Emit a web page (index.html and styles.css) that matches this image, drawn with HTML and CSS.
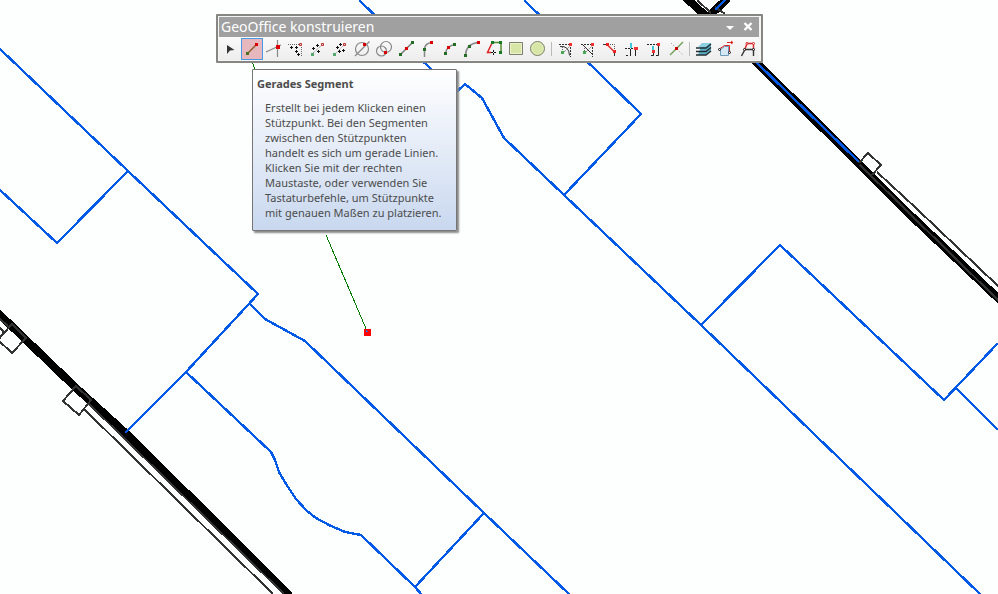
FILE: index.html
```
<!DOCTYPE html>
<html lang="de">
<head>
<meta charset="utf-8">
<title>GeoOffice konstruieren</title>
<link rel="stylesheet" href="styles.css">
</head>
<body>
<main class="workspace">
  <svg class="map" viewBox="0 0 998 594" preserveAspectRatio="xMinYMin slice" aria-hidden="true">
    <g class="road">
      <path d="M-2 313L75 387 130 437 290 596"/>
      <path d="M684 -4L756 62 859 164 906 211 1001 301"/>
      <path d="M708 17L728 -2"/>
    </g>
    <g class="kerb">
      <path d="M88 403L284 594M84 409L273 594M0 319L8 326"/>
      <path d="M63 401L76 386 91 400 79 415Z"/>
      <path d="M0 328L4 332 0 337M-2 340L12 353 26 338 12 324Z"/>
      <path d="M697 0L711 13M859 163L868 153 881 165 872 175M877 172L917 209 998 286M860 165L998 300M715 7L725 14"/>
    </g>
    <g class="parcel">
      <path d="M0 49L128 171 258 294 186 372 125 433"/>
      <path d="M0 190L57 243 128 171"/>
      <path d="M249 303L265 319 305 341 484 513 570 595"/>
      <path d="M186 372L271 452 275 460 279 472 286 484 296 499 307 511 316 518 329 525 345 532 361 535 415 587 422 595M484 513L415 587"/>
      <path d="M359 0L432 70M450 98L465 84 482 98 504 138 564 195 701 325 981 595"/>
      <path d="M524 0L641 114 564 195"/>
      <path d="M701 325L780 245 944 400 998 343M956 388L998 430"/>
      <path d="M755 61L859 162M715 10L726 -1"/>
    </g>
    <path class="sketch" d="M252 62L255 69M326 235L367 331"/>
    <path fill="#f00" d="M364 329h7v7h-7z"/>
    <path fill="#3a6ad8" d="M366 330h1v1h1v1h-2z"/>
  </svg>

  <section class="toolbar" aria-label="GeoOffice konstruieren">
    <header class="titlebar">
      <h1 class="title">GeoOffice konstruieren</h1>
      <button class="title-btn" aria-label="Optionen"><svg viewBox="0 0 18 18"><path fill="#fff" d="M5 8h8l-4 4z"/></svg></button>
      <button class="title-btn" aria-label="Schließen"><svg viewBox="0 0 18 18"><path stroke="#fff" stroke-width="2.400" d="M5.500 5l7 7M12.500 5l-7 7"/></svg></button>
    </header>
    <div class="tools">
      <button class="tool" aria-label="Auswählen"><svg viewBox="0 0 22 22"><path fill="#333" d="M8 7l7.500 5-4.500.500L8 16z"/></svg></button>
      <button class="tool active" aria-label="Gerades Segment" aria-describedby="tip"><svg viewBox="0 0 22 22"><path stroke="#8a5a28" stroke-width="1.500" d="M6 16l9-9"/><path fill="#46701c" d="M5 14h3v3H5z"/><path fill="#d00" d="M14 5h3v3h-3z"/></svg></button>
      <button class="tool" aria-label="Schnittpunkt"><svg viewBox="0 0 22 22"><path stroke="#888" stroke-width="1.200" d="M3 14l15-7M14.500 2v17"/><path fill="#d00" d="M13 7h4v4h-4z"/></svg></button>
      <button class="tool" aria-label="Richtung und Länge"><svg viewBox="0 0 22 22"><path stroke="#666" stroke-dasharray="1 1" d="M3 6.500h11M16.500 9v10"/><path stroke="#111" d="M5 9.500h3M6.500 8v3M10 9.500h3M11.500 8v3M10 13.500h3M11.500 12v3M12 16.500h3M13.500 15v3"/><path fill="#f4c8c8" stroke="#b33" d="M14.500 5.500h2v2h-2z"/></svg></button>
      <button class="tool" aria-label="Abstand"><svg viewBox="0 0 22 22"><path stroke="#777" stroke-dasharray="1 1" d="M6 15l9-8"/><path stroke="#111" d="M5 10.500h3M6.500 9v3M9 7.500h3M10.500 6v3M10 13.500h3M11.500 12v3"/><path fill="#53a96b" d="M4 15h3v3H4z"/><path fill="#f4c8c8" stroke="#b33" d="M14.500 5.500h2v2h-2z"/></svg></button>
      <button class="tool" aria-label="Mittelpunkt"><svg viewBox="0 0 22 22"><path stroke="#888" stroke-dasharray="1 1" d="M6 16l9-9"/><path stroke="#111" d="M7 9.500h3M8.500 8v3M9 13.500h3M10.500 12v3M13 12.500h3M14.500 11v3M10 6.500h3M11.500 5v3"/><path fill="#53a96b" d="M4 15h3v3H4z"/><path fill="#f4c8c8" stroke="#b33" d="M14.500 5.500h2v2h-2z"/></svg></button>
      <button class="tool" aria-label="Tangente am Kreis"><svg viewBox="0 0 22 22"><g stroke="#888" stroke-width="1.200"><circle cx="11" cy="11" r="6.500"/><path d="M4 18L18.500 3.500"/></g><path fill="#d00" d="M12 5h3v3h-3z"/></svg></button>
      <button class="tool" aria-label="Kreisschnitt"><svg viewBox="0 0 22 22"><g stroke="#888" stroke-width="1.200"><circle cx="13" cy="9" r="5.500"/><circle cx="8.500" cy="13" r="5"/></g><path fill="#d00" d="M11 13h3v3h-3z"/></svg></button>
      <button class="tool" aria-label="Mittelpunktlinie"><svg viewBox="0 0 22 22"><path stroke="#777" stroke-width="1.500" d="M5 17L18 4"/><path fill="#246b24" d="M4 15h3v3H4zM16 3h3v3h-3z"/><path fill="#d00" d="M10 9h3v3h-3z"/></svg></button>
      <button class="tool" aria-label="Tangentialer Bogen"><svg viewBox="0 0 22 22"><path stroke="#888" stroke-width="1.500" d="M7.500 19v-8Q8 5 15 4.500"/><path fill="#246b24" d="M6 10h3v3H6z"/><path fill="#d00" d="M13 3h3v3h-3z"/></svg></button>
      <button class="tool" aria-label="Bogensegment"><svg viewBox="0 0 22 22"><path stroke="#888" stroke-width="1.500" d="M6.500 16Q7 8 16 6.500"/><path fill="#246b24" d="M5 14h3v3H5zM14 5h3v3h-3z"/><path fill="#d00" d="M8 8h3v3H8z"/></svg></button>
      <button class="tool" aria-label="Endpunktbogen"><svg viewBox="0 0 22 22"><path stroke="#888" stroke-width="1.500" d="M4.500 17Q5 6 17 4.500"/><path fill="#246b24" d="M3 16h3v3H3zM7 7h3v3H7z"/><path fill="#d00" d="M16 3h3v3h-3z"/></svg></button>
      <button class="tool" aria-label="Verfolgen"><svg viewBox="0 0 22 22"><path stroke="#528c32" stroke-width="1.500" d="M9 4.500h9V15"/><path stroke="#d22" stroke-width="1.500" d="M9 5L4.500 14.500H8"/><path fill="#197a24" d="M8 3h3v3H8zM16 3h3v3h-3zM16 13h3v3h-3z"/><path fill="#fff" d="M9 13h3v3H9z"/><path stroke="#111" d="M8 14.500h2M11 14.500h2M10.500 12v2M10.500 15v2"/></svg></button>
      <button class="tool" aria-label="Rechteck"><svg viewBox="0 0 22 22"><path fill="#d7e5a6" stroke="#7b7f6c" d="M4.500 4.500h13v12h-13z"/><path stroke="#ebf2ce" d="M5.500 5.500h11v10h-11z"/></svg></button>
      <button class="tool" aria-label="Kreis"><svg viewBox="0 0 22 22"><circle cx="10.500" cy="10.500" r="7" fill="#d7e5a6" stroke="#7b7f6c"/><circle cx="10.500" cy="10.500" r="5.500" stroke="#e4edbf"/></svg></button>
      <span class="divider"></span>
      <button class="tool" aria-label="Abrunden"><svg viewBox="0 0 22 22"><path stroke="#333" stroke-dasharray="2 1" d="M4 6.500h10M15.500 9v10"/><path stroke="#333" d="M5 8.500q9-1 9.500 9"/><path stroke="#666" stroke-dasharray="1 1" d="M7.500 9v5M9 14l6-6"/><path fill="#44a952" d="M6 13h3v3H6z"/><path fill="#e33" d="M14 5h3v3h-3z"/></svg></button>
      <button class="tool" aria-label="Abschrägen"><svg viewBox="0 0 22 22"><path stroke="#333" stroke-dasharray="2 1" d="M4 6.500h10M15.500 9v10"/><path stroke="#333" d="M6 7l9 9"/><path stroke="#666" stroke-dasharray="1 1" d="M7.500 10v4M9 14l6-6"/><path fill="#44a952" d="M6 13h3v3H6z"/><path fill="#e33" d="M14 5h3v3h-3z"/></svg></button>
      <button class="tool" aria-label="Fase"><svg viewBox="0 0 22 22"><path stroke="#333" d="M4 6.500h4M15.500 14v4"/><path stroke="#555" stroke-dasharray="1 1" d="M9 6.500h6.500V12"/><path stroke="#d22" stroke-width="1.200" d="M8 6.500l7 7"/><path fill="#e22" d="M7 5h3v3H7zM14 12h3v3h-3z"/></svg></button>
      <button class="tool" aria-label="Verlängern"><svg viewBox="0 0 22 22"><path stroke="#222" stroke-dasharray="2 1" d="M4 10.500h10M5 17.500h3"/><path stroke="#222" d="M9.500 11v7M14.500 12v6"/><path stroke="#3bc7dc" stroke-width="2" d="M10 5v5"/><path fill="#e33" d="M13 9h4v3h-4z"/></svg></button>
      <button class="tool" aria-label="Stutzen"><svg viewBox="0 0 22 22"><path stroke="#222" stroke-dasharray="2 1" d="M4 6.500h10"/><path stroke="#222" d="M10.500 14v3.500H8M15.500 8v9.500H13"/><path stroke="#3bc7dc" stroke-width="2" d="M10 8v5"/><path fill="#e33" d="M14 5h3v3h-3zM9 12h3v3H9z"/></svg></button>
      <button class="tool" aria-label="Teilen"><svg viewBox="0 0 22 22"><path stroke="#72a258" stroke-width="1.500" d="M5 17L18 4"/><path stroke="#888" stroke-dasharray="1 2" d="M6 5l12 12"/><path fill="#c00" d="M10 9h3v3h-3z"/></svg></button>
      <span class="divider"></span>
      <button class="tool" aria-label="Ebenen"><svg viewBox="0 0 22 22"><path fill="#5eb0c8" d="M9 5h9v8l-5 4H5z"/><path fill="#8cd0df" d="M9 5h9l-5 4H5z"/><path stroke="#202c30" stroke-width="1.400" d="M3 10h10l5-4M3 13.500h10l5-4M3 17h10l5-4"/></svg></button>
      <button class="tool" aria-label="Umformen"><svg viewBox="0 0 22 22"><path fill="#d5e7f4" stroke="#6c9cbc" d="M5.500 17.500v-6l4-3h4v9z"/><path stroke="#d22" d="M5 10.500L9.500 7.500h5V14M12 4.500h6M16 3l2 1.500L16 6"/><g fill="#fff" stroke="#111"><circle cx="4.500" cy="11.500" r="1"/><circle cx="14.500" cy="14.500" r="1"/></g></svg></button>
      <button class="tool" aria-label="Stützpunkte"><svg viewBox="0 0 22 22"><path stroke="#333" stroke-width="1.400" d="M4.500 18L8 11.500h8.500V18"/><path stroke="#d22" stroke-width="1.400" d="M8 11l2-5.500h6.500V11"/><g fill="#fff" stroke="#d22"><circle cx="10" cy="5.500" r="1"/><circle cx="16.500" cy="5.500" r="1"/></g><g fill="#fff" stroke="#111"><circle cx="7.500" cy="11.500" r="1"/><circle cx="16.500" cy="11.500" r="1"/></g></svg></button>
    </div>
  </section>

  <aside class="tooltip" id="tip" role="tooltip">
    <h2 class="tip-title">Gerades Segment</h2>
    <p class="tip-text">Erstellt bei jedem Klicken einen<br>Stützpunkt. Bei den Segmenten<br>zwischen den Stützpunkten<br>handelt es sich um gerade Linien.<br>Klicken Sie mit der rechten<br>Maustaste, oder verwenden Sie<br>Tastaturbefehle, um Stützpunkte<br>mit genauen Maßen zu platzieren.</p>
  </aside>
</main>
</body>
</html>
```
FILE: styles.css
```
* { box-sizing: border-box; }
body {
  margin: 0;
  background: #fdfefe;
  font-family: "Noto Sans", "Open Sans", sans-serif;
}
.workspace {
  position: relative;
  height: 100vh;
  overflow: hidden;
}
.map {
  display: block;
  width: 100%;
  height: 100%;
  fill: none;
  shape-rendering: crispEdges;
}
.road { stroke: #000; stroke-width: 8; }
.kerb { stroke: #333; stroke-width: 2; }
.parcel { stroke: #005ae6; stroke-width: 2.400; }
.sketch { stroke: #007d00; stroke-width: 1; }

.toolbar {
  position: absolute;
  left: 216px;
  top: 14px;
  border: 2px solid #868783;
  border-radius: 1px;
  padding: 1px 2px 1px 1px;
  background: #f5f5f5;
}
.titlebar {
  display: flex;
  align-items: center;
  height: 20px;
  padding: 0 2px;
  background: #a0a0a0;
}
.title {
  flex: 1;
  margin: 0;
  color: #fff;
  font-size: 14px;
  line-height: 20px;
  font-weight: 400;
}
.title-btn {
  width: 18px;
  height: 18px;
  padding: 0;
  border: 0;
  background: none;
}
.title-btn svg, .tool svg {
  display: block;
  width: 100%;
  height: 100%;
  fill: none;
}
.tools {
  display: flex;
  align-items: center;
  height: 23px;
  background: linear-gradient(#fafafa, #ededed);
}
.tool {
  width: 22px;
  height: 22px;
  padding: 0;
  border: 0;
  background: none;
}
.tool.active {
  background: #e6b8bd;
  outline: 1px solid #4898e8;
  outline-offset: -1px;
}
.divider {
  width: 1px;
  height: 14px;
  margin: 0 3px 0 2px;
  background: #bababa;
}
.tooltip {
  position: absolute;
  left: 252px;
  top: 69px;
  padding: 6px 14px 10px 4px;
  border: 1px solid #767676;
  border-radius: 1px;
  background: linear-gradient(#fff, #c9d8ef);
  box-shadow: 2px 2px 2px #888;
  color: #4c4c4c;
  font-size: 11px;
  line-height: 15px;
}
.tip-title {
  margin: 0 0 9px;
  font-size: 11px;
  line-height: 15px;
}
.tip-text { margin: 0 0 0 8px; }
```
